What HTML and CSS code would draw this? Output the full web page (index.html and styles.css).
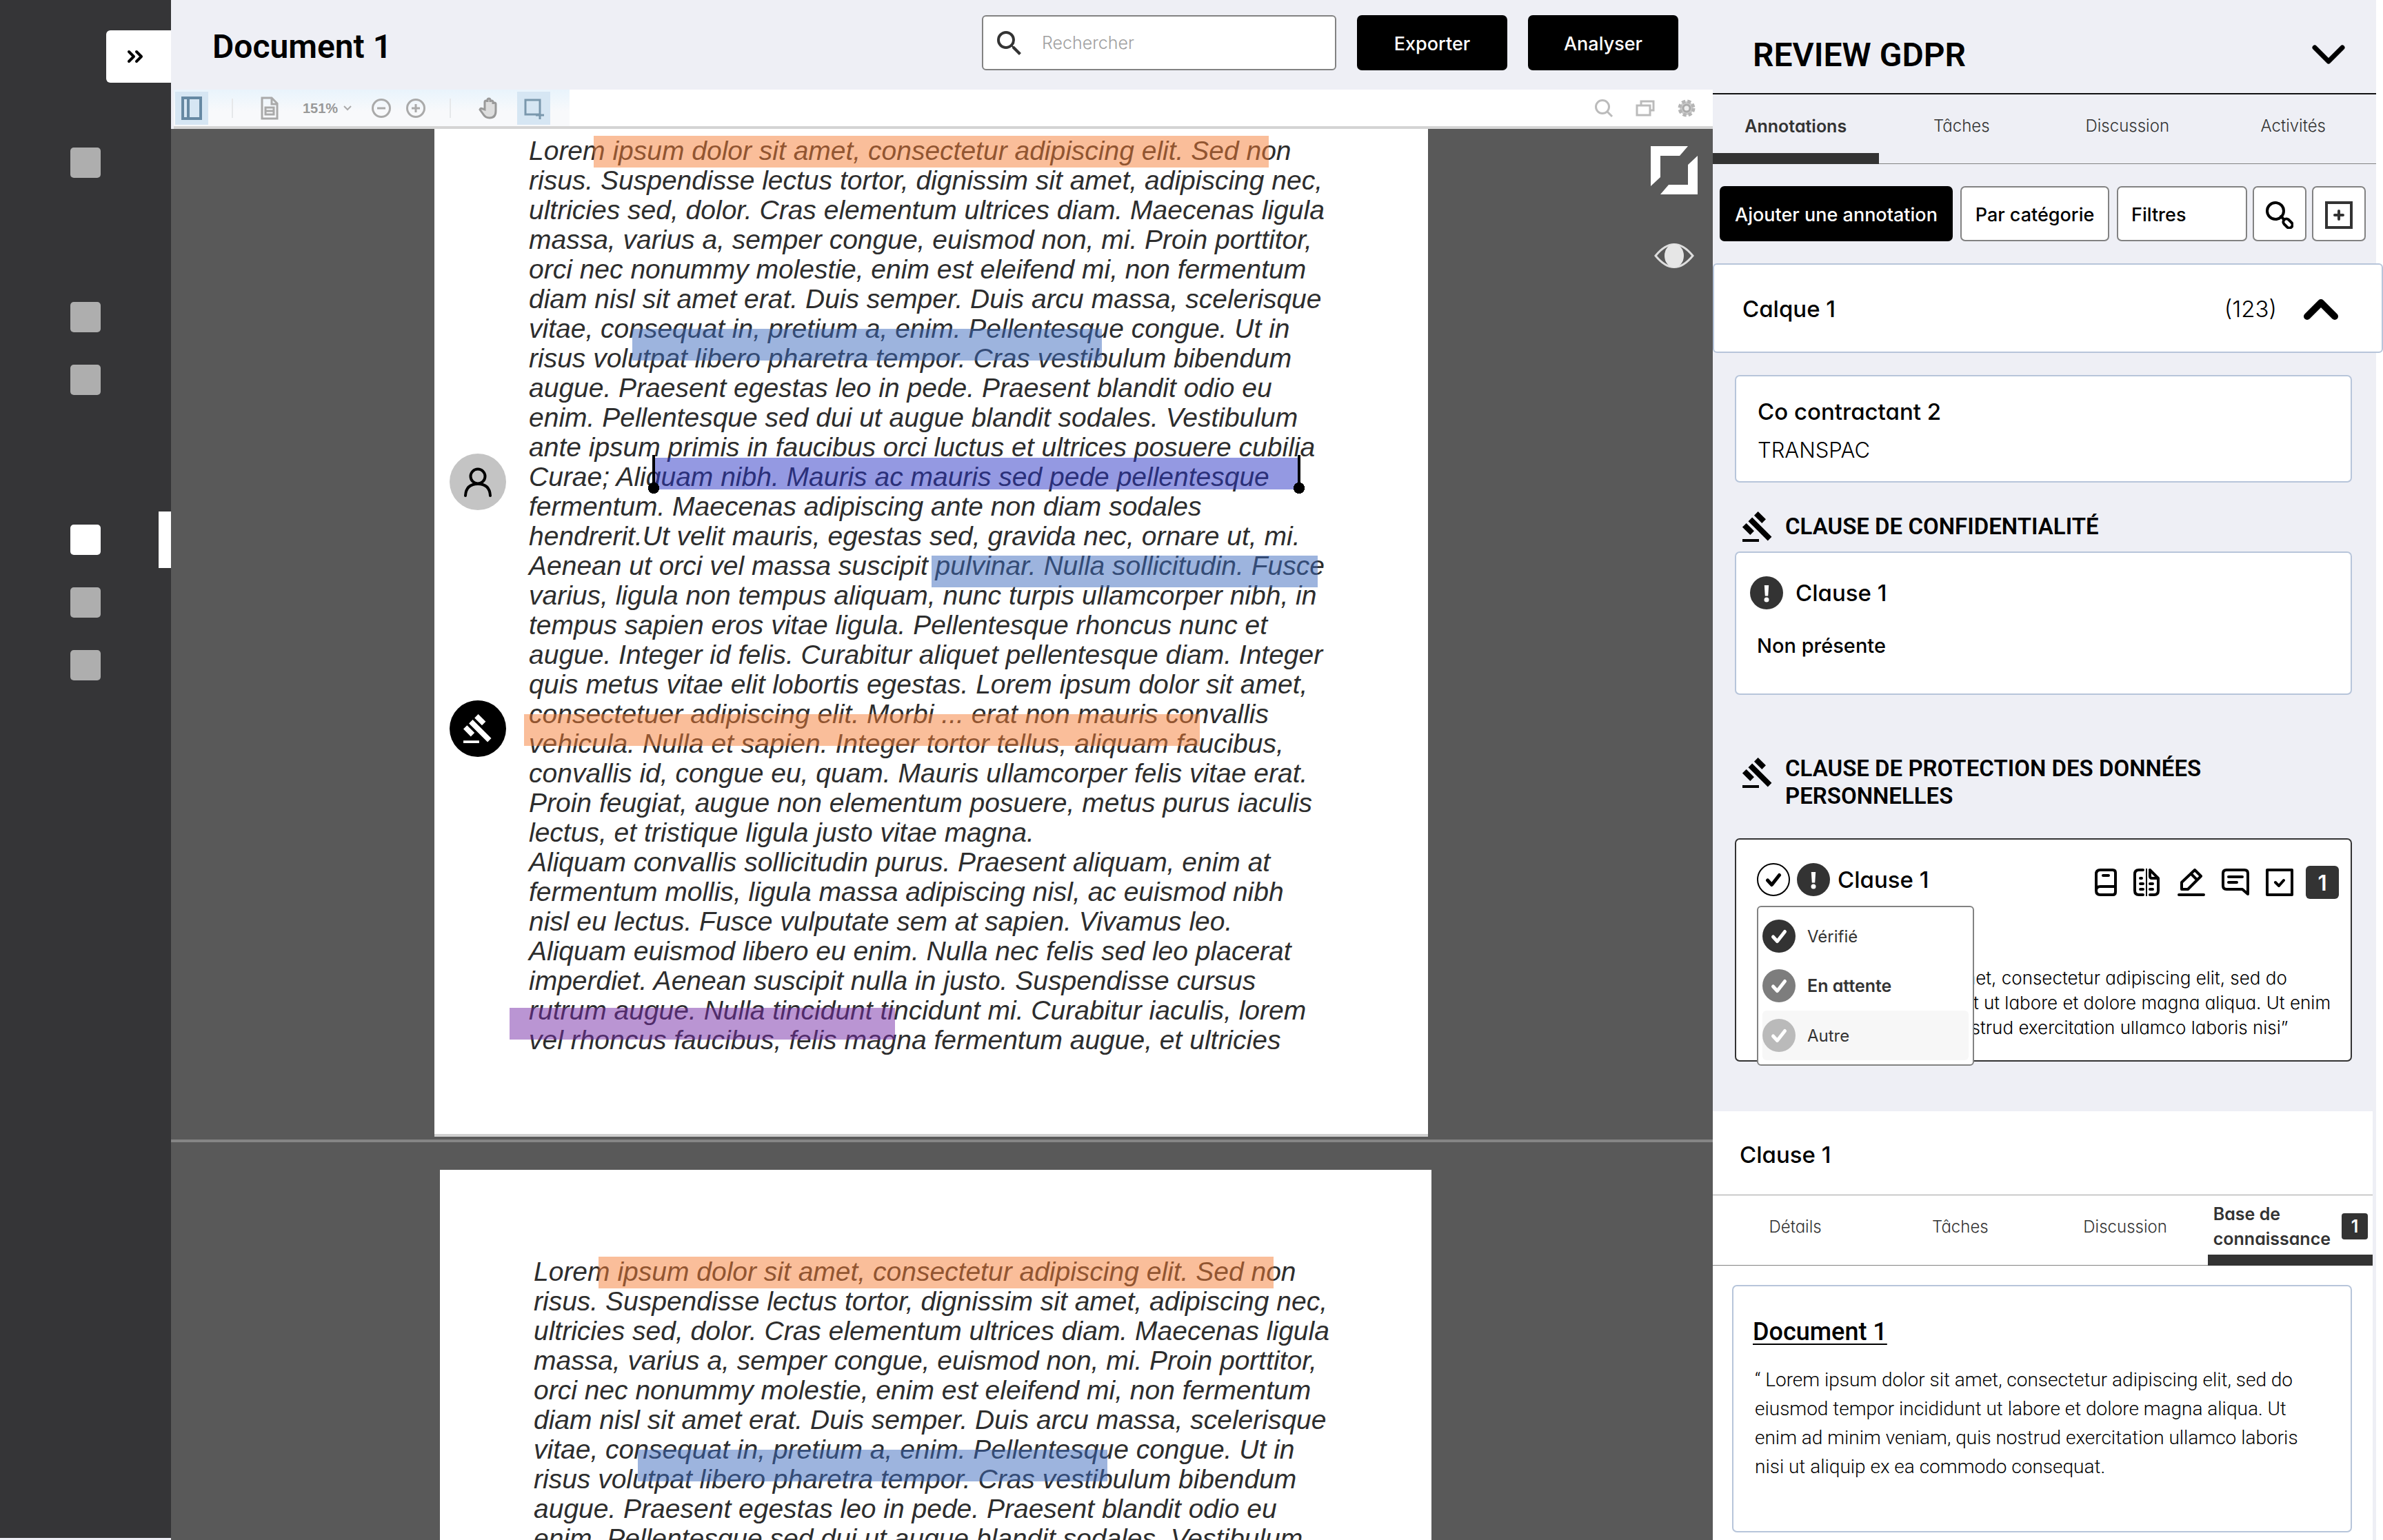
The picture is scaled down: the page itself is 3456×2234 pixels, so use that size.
FILE: index.html
```html
<!DOCTYPE html>
<html lang="fr">
<head>
<meta charset="utf-8">
<title>Document 1 - Review GDPR</title>
<link rel="stylesheet" href="styles.css">
</head>
<body>
<svg class="sprite" aria-hidden="true">
  <symbol id="gavel" viewBox="1 1 22 22"><path d="M1 21h12v2H1zM5.245 8.07l2.83-2.827 14.14 14.142-2.828 2.828zM12.317 1l5.657 5.656-2.83 2.83-5.654-5.66zM3.825 9.485l5.657 5.657-2.828 2.828-5.657-5.657z"/></symbol>
  <symbol id="check" viewBox="0 0 48 48"><path d="M15.500 25l6 6.500 11-14" fill="none" stroke="currentColor" stroke-width="5" stroke-linecap="round" stroke-linejoin="round"/></symbol>
  <symbol id="alert" viewBox="0 0 48 48"><path d="M20.800 13h6.400l-1 15.500h-4.400z" fill="currentColor"/><circle cx="24" cy="34" r="3.500" fill="currentColor"/></symbol>
</svg>
<div class="app">
  <nav class="sidebar" aria-label="Navigation">
    <button class="toggle" aria-label="Ouvrir le menu"><svg width="24" height="20" viewBox="0 0 24 20"><path d="M3 3l7 7-7 7M14 3l7 7-7 7" class="line w4"/></svg></button>
    <ul class="nav-list">
      <li class="nav-first"><a href="#n1" aria-label="Accueil"></a></li>
      <li class="nav-group"><a href="#n2" aria-label="Dossiers"></a></li>
      <li><a href="#n3" aria-label="Recherche"></a></li>
      <li class="nav-group current"><a href="#n4" aria-label="Documents"></a></li>
      <li><a href="#n5" aria-label="Rapports"></a></li>
      <li><a href="#n6" aria-label="Paramètres"></a></li>
    </ul>
  </nav>

  <main class="viewer">
    <header class="topbar">
      <h1>Document 1</h1>
      <label class="search">
        <svg width="35" height="35" viewBox="3 3 17.500 17.500"><path d="M15.500 14h-.79l-.28-.27A6.471 6.471 0 0 0 16 9.500 6.500 6.500 0 1 0 9.500 16c1.610 0 3.090-.59 4.230-1.570l.27.28v.79l5 4.990L20.490 19l-4.990-5zm-6 0C7.010 14 5 11.990 5 9.500S7.010 5 9.500 5 14 7.010 14 9.500 11.990 14 9.500 14z" fill="#333"/></svg>
        <input type="search" placeholder="Rechercher" aria-label="Rechercher">
      </label>
      <button class="btn primary">Exporter</button>
      <button class="btn primary">Analyser</button>
    </header>

    <div class="pdfbar">
      <div class="pdf-left">
        <button class="pdf-btn on first" aria-label="Vignettes"><svg width="30" height="36" viewBox="0 0 30 36"><path d="M2 3h26v30H2zM10 3v30" fill="none" stroke="#6689a3" stroke-width="4"/></svg></button>
        <i class="sep"></i>
        <button class="pdf-btn" aria-label="Page"><svg width="26" height="34" viewBox="0 0 26 34"><path d="M2 2h14l8 8v22H2zM16 2v9h8M7 16h12v10H7zM7 21h12" fill="none" stroke="#aaa" stroke-width="3"/></svg></button>
        <button class="zoom-level">151% <svg width="12" height="8" viewBox="0 0 12 8"><path d="M1 1l5 5 5-5" fill="none" stroke="#aaa" stroke-width="2"/></svg></button>
        <button class="pdf-btn" aria-label="Zoom arrière"><svg width="30" height="30" viewBox="0 0 30 30"><circle cx="15" cy="15" r="12.500" fill="none" stroke="#aaa" stroke-width="3"/><path d="M9 15h12" stroke="#aaa" stroke-width="3"/></svg></button>
        <button class="pdf-btn" aria-label="Zoom avant"><svg width="30" height="30" viewBox="0 0 30 30"><circle cx="15" cy="15" r="12.500" fill="none" stroke="#aaa" stroke-width="3"/><path d="M9 15h12M15 9v12" stroke="#aaa" stroke-width="3"/></svg></button>
        <i class="sep"></i>
        <button class="pdf-btn hand" aria-label="Main"><svg width="30" height="32" viewBox="0 0 30 32"><path d="M9 18V7q0-2 2-2t2 2V4q0-2 2-2t2 2v3q0-2 2-2t2 2v3q0-2 2-2t2 2v10q0 10-9 10-6 0-9-5l-5-7q1-3 4-1z" fill="#ddd" stroke="#999" stroke-width="3"/></svg></button>
        <button class="pdf-btn on" aria-label="Sélection"><svg width="30" height="32" viewBox="0 0 30 32"><path d="M3 4h21v21H3zM24 20v12M18 26h12" fill="none" stroke="#7a98ad" stroke-width="3"/></svg></button>
      </div>
      <div class="pdf-right">
        <button class="pdf-btn" aria-label="Chercher"><svg width="28" height="28" viewBox="0 0 28 28"><circle cx="12" cy="12" r="9.500" fill="none" stroke="#bbb" stroke-width="3"/><path d="M19 19l7 7" stroke="#bbb" stroke-width="3"/></svg></button>
        <button class="pdf-btn" aria-label="Fenêtres"><svg width="28" height="26" viewBox="0 0 28 26"><path d="M2 9h19v14H2zM8 9V3h18v13h-5" fill="none" stroke="#bbb" stroke-width="3"/></svg></button>
        <button class="pdf-btn" aria-label="Réglages"><svg width="28" height="28" viewBox="0 0 28 28"><circle cx="14" cy="14" r="10" fill="#ccc" stroke="#b5b5b5" stroke-width="5" stroke-dasharray="5 3"/><circle cx="14" cy="14" r="5" fill="#eee" stroke="#aaa" stroke-width="3"/></svg></button>
      </div>
    </div>

    <div class="canvas">
      <article class="page">
        <p>Lorem ipsum dolor sit amet, consectetur adipiscing elit. Sed non<br>
risus. Suspendisse lectus tortor, dignissim sit amet, adipiscing nec,<br>
ultricies sed, dolor. Cras elementum ultrices diam. Maecenas ligula<br>
massa, varius a, semper congue, euismod non, mi. Proin porttitor,<br>
orci nec nonummy molestie, enim est eleifend mi, non fermentum<br>
diam nisl sit amet erat. Duis semper. Duis arcu massa, scelerisque<br>
vitae, consequat in, pretium a, enim. Pellentesque congue. Ut in<br>
risus volutpat libero pharetra tempor. Cras vestibulum bibendum<br>
augue. Praesent egestas leo in pede. Praesent blandit odio eu<br>
enim. Pellentesque sed dui ut augue blandit sodales. Vestibulum<br>
ante ipsum primis in faucibus orci luctus et ultrices posuere cubilia<br>
Curae; Aliquam nibh. Mauris ac mauris sed pede pellentesque<br>
fermentum. Maecenas adipiscing ante non diam sodales<br>
hendrerit.Ut velit mauris, egestas sed, gravida nec, ornare ut, mi.<br>
Aenean ut orci vel massa suscipit pulvinar. Nulla sollicitudin. Fusce<br>
varius, ligula non tempus aliquam, nunc turpis ullamcorper nibh, in<br>
tempus sapien eros vitae ligula. Pellentesque rhoncus nunc et<br>
augue. Integer id felis. Curabitur aliquet pellentesque diam. Integer<br>
quis metus vitae elit lobortis egestas. Lorem ipsum dolor sit amet,<br>
consectetuer adipiscing elit. Morbi ... erat non mauris convallis<br>
vehicula. Nulla et sapien. Integer tortor tellus, aliquam faucibus,<br>
convallis id, congue eu, quam. Mauris ullamcorper felis vitae erat.<br>
Proin feugiat, augue non elementum posuere, metus purus iaculis<br>
lectus, et tristique ligula justo vitae magna.<br>
Aliquam convallis sollicitudin purus. Praesent aliquam, enim at<br>
fermentum mollis, ligula massa adipiscing nisl, ac euismod nibh<br>
nisl eu lectus. Fusce vulputate sem at sapien. Vivamus leo.<br>
Aliquam euismod libero eu enim. Nulla nec felis sed leo placerat<br>
imperdiet. Aenean suscipit nulla in justo. Suspendisse cursus<br>
rutrum augue. Nulla tincidunt tincidunt mi. Curabitur iaculis, lorem<br>
vel rhoncus faucibus, felis magna fermentum augue, et ultricies</p>
        <span class="hl orange hl-a"></span>
        <span class="hl blue hl-b"></span>
        <span class="hl select hl-c"></span>
        <span class="hl blue hl-d"></span>
        <span class="hl orange hl-e"></span>
        <span class="hl purple hl-f"></span>
        <button class="pin user" aria-label="Annotation utilisateur"><svg width="40" height="44" viewBox="0 0 40 44"><circle cx="20" cy="14" r="10.500" class="line w4"/><path d="M2 42q1-17 18-17t18 17" class="line w4"/></svg></button>
        <button class="pin legal" aria-label="Annotation juridique"><svg width="42" height="44"><use href="#gavel"/></svg></button>
      </article>
      <hr>
      <article class="page second">
        <p>Lorem ipsum dolor sit amet, consectetur adipiscing elit. Sed non<br>
risus. Suspendisse lectus tortor, dignissim sit amet, adipiscing nec,<br>
ultricies sed, dolor. Cras elementum ultrices diam. Maecenas ligula<br>
massa, varius a, semper congue, euismod non, mi. Proin porttitor,<br>
orci nec nonummy molestie, enim est eleifend mi, non fermentum<br>
diam nisl sit amet erat. Duis semper. Duis arcu massa, scelerisque<br>
vitae, consequat in, pretium a, enim. Pellentesque congue. Ut in<br>
risus volutpat libero pharetra tempor. Cras vestibulum bibendum<br>
augue. Praesent egestas leo in pede. Praesent blandit odio eu<br>
enim. Pellentesque sed dui ut augue blandit sodales. Vestibulum</p>
        <span class="hl orange hl-g"></span>
        <span class="hl blue hl-h"></span>
      </article>
      <div class="float-tools">
        <button aria-label="Plein écran"><svg width="68" height="70" viewBox="0 0 68 70"><path d="M0 0h54L42 14H14v31L0 58zM68 14v56H14l12-14h28V27z" fill="#fff"/></svg></button>
        <button aria-label="Afficher"><svg width="58" height="38" viewBox="0 0 58 38"><path d="M2 19Q29-14 56 19 29 52 2 19z" fill="none" stroke="#ddd" stroke-width="3"/><ellipse cx="29" cy="19" rx="14" ry="17" fill="#e6e6e6"/></svg></button>
      </div>
    </div>
  </main>

  <aside class="panel">
    <div class="panel-in">
      <header class="panel-head">
        <h2>REVIEW GDPR</h2>
        <button aria-label="Replier"><svg width="48" height="30" viewBox="0 0 48 30"><path d="M4 4l20 20L44 4" class="line w7"/></svg></button>
      </header>
      <div class="tabs" role="tablist">
        <button role="tab" aria-selected="true">Annotations</button>
        <button role="tab">Tâches</button>
        <button role="tab">Discussion</button>
        <button role="tab">Activités</button>
      </div>
      <div class="actions">
        <button class="btn primary add">Ajouter une annotation</button>
        <button class="btn outline cat">Par catégorie</button>
        <select class="btn outline filter" aria-label="Filtres"><option>Filtres</option></select>
        <button class="btn outline icon" aria-label="Rechercher une annotation"><svg width="40" height="40" viewBox="0 0 40 40"><circle cx="14" cy="14" r="12" class="line w4"/><path d="M22 22l4 4" class="line w4"/><rect x="24.500" y="27.500" width="15" height="9" rx="4.500" transform="rotate(45 32 32)" class="line w4"/></svg></button>
        <button class="btn outline icon" aria-label="Nouveau calque"><svg width="40" height="40" viewBox="0 0 40 40"><path d="M2 2h36v36H2zM20 14v12M14 20h12" fill="none" stroke="#333" stroke-width="4" stroke-linecap="round"/></svg></button>
      </div>
      <section class="layer">
        <h3>Calque 1</h3>
        <span class="count">(123)</span>
        <button aria-label="Replier le calque"><svg width="52" height="34" viewBox="0 0 52 34"><path d="M6 28L26 8l20 20" class="line w9"/></svg></button>
      </section>
      <div class="list">
        <section class="card party">
          <h4>Co contractant 2</h4>
          <p>TRANSPAC</p>
        </section>
        <h3 class="clause-title"><svg width="44" height="44"><use href="#gavel"/></svg><span>CLAUSE DE CONFIDENTIALITÉ</span></h3>
        <section class="card missing">
          <div class="card-head"><svg class="dot dark" width="48" height="48"><use href="#alert"/></svg><h4>Clause 1</h4></div>
          <p>Non présente</p>
        </section>
        <h3 class="clause-title tall"><svg width="44" height="44"><use href="#gavel"/></svg><span>CLAUSE DE PROTECTION DES DONNÉES<br>PERSONNELLES</span></h3>
        <section class="card active">
          <div class="card-head">
            <button class="status" aria-label="Statut"><svg class="dot ring" width="48" height="48" viewBox="2 2 44 44"><use href="#check" width="48" height="48"/></svg></button>
            <svg class="dot dark" width="48" height="48"><use href="#alert"/></svg>
            <h4>Clause 1</h4>
            <div class="tools">
              <button aria-label="Livre"><svg width="32" height="40" viewBox="0 0 32 40"><path d="M8 2h18q4 0 4 4v28q0 4-4 4H8q-6 0-6-6V8q0-6 6-6zM2 32q0-6 6-6h22M12 10h8" class="line w4"/></svg></button>
              <button aria-label="Comparer"><svg width="40" height="40" viewBox="0 0 40 40"><path d="M14 2H8Q2 2 2 8v24q0 6 6 6h6M24 2l12 12v18q0 6-6 6h-6M24 4v7q0 3 3 3h8M10 14h2M10 22h4M10 30h4M24 22h4M24 30h4" class="line w4"/><path d="M19 0v40" fill="none" stroke="#000" stroke-width="2"/></svg></button>
              <button aria-label="Modifier"><svg width="40" height="40" viewBox="0 0 40 40"><path d="M2 38h36M6 30V20L25 2l9 9-19 19zM20 8l8 8" class="line w4"/></svg></button>
              <button aria-label="Commenter"><svg width="40" height="40" viewBox="0 0 40 40"><path d="M7 2h26q5 0 5 5v30l-8-7H7q-5 0-5-5V7q0-5 5-5zM10 12h20M10 20h12" class="line w4"/></svg></button>
              <button aria-label="Tâche"><svg width="40" height="40" viewBox="0 0 40 40"><path d="M2 2h36v36H2zM14 20l5 5 7-8" class="line w4"/></svg></button>
              <span class="badge">1</span>
            </div>
          </div>
          <p>“Lorem ipsum dolor sit amet, consectetur adipiscing elit, sed do<br>eiusmod tempor incididunt ut labore et dolore magna aliqua. Ut enim<br>ad minim veniam, quis nostrud exercitation ullamco laboris nisi”</p>
          <div class="menu" role="menu">
            <button role="menuitem"><svg class="dot dark" width="48" height="48"><use href="#check"/></svg>Vérifié</button>
            <button role="menuitem" class="bold"><svg class="dot mid" width="48" height="48"><use href="#check"/></svg>En attente</button>
            <button role="menuitem" class="hover"><svg class="dot light" width="48" height="48"><use href="#check"/></svg>Autre</button>
          </div>
        </section>
      </div>
      <section class="detail">
        <h3>Clause 1</h3>
        <div class="tabs" role="tablist">
          <button role="tab">Détails</button>
          <button role="tab">Tâches</button>
          <button role="tab">Discussion</button>
          <button role="tab" aria-selected="true" class="kb"><span>Base de<br>connaissance</span><span class="badge small">1</span></button>
        </div>
        <article class="card source">
          <h4><a href="#doc1">Document 1</a></h4>
          <p>“ Lorem ipsum dolor sit amet, consectetur adipiscing elit, sed do<br>eiusmod tempor incididunt ut labore et dolore magna aliqua. Ut<br>enim ad minim veniam, quis nostrud exercitation ullamco laboris<br>nisi ut aliquip ex ea commodo consequat.</p>
        </article>
      </section>
    </div>
  </aside>
</div>
</body>
</html>
```
FILE: styles.css
```css
* { box-sizing: border-box; margin: 0; padding: 0; }
body { font-family: Inter, sans-serif; font-feature-settings: "cv11"; color: #000; background: #eeeff5; }
button, input, select { font: inherit; font-feature-settings: inherit; color: inherit; background: none; border: 0; }
svg { display: block; flex: none; }
.sprite { position: absolute; width: 0; height: 0; }
.line { fill: none; stroke: currentColor; stroke-linecap: round; stroke-linejoin: round; }
.w4 { stroke-width: 4px; }
.w7 { stroke-width: 7px; }
.w9 { stroke-width: 10px; }
ul { list-style: none; }

.app { display: grid; grid-template-columns: 248px 1fr 972px; height: 100vh; overflow: hidden; }

/* left navigation */
.sidebar { background: #353537; margin-bottom: 5px; padding-top: 44px; }
.toggle { display: flex; align-items: center; justify-content: center; width: 94px; height: 76px; margin-left: auto; padding-right: 10px; background: #fff; border-radius: 6px 0 0 6px; }
.nav-first { margin-top: 94px; }
.nav-list li { display: flex; align-items: center; justify-content: space-between; height: 44px; margin-bottom: 47px; padding-left: 102px; }
.nav-list li.nav-first { margin-bottom: 180px; }
.nav-list a { width: 44px; height: 44px; border-radius: 5px; background: #aeaeae; }
.nav-list li.current { margin-top: 188px; }
.nav-list .current a { background: #fff; }
.nav-list .current::after { content: ""; width: 18px; height: 82px; background: #fff; }

/* document viewer */
.viewer { display: flex; flex-direction: column; min-width: 0; min-height: 0; }
.topbar { display: flex; align-items: flex-start; gap: 30px; height: 130px; flex: none; padding: 22px 50px 0 60px; }
.topbar h1 { flex: 1; font: 600 48px/56px Roboto, sans-serif; padding-top: 18px; }
.search { display: flex; align-items: center; gap: 30px; width: 514px; height: 80px; padding: 0 20px; background: #fff; border: 2px solid #828282; border-radius: 6px; }
.search input { flex: 1; min-width: 0; font-size: 25px; font-weight: 300; outline: 0; }
.search input::placeholder { color: #a0a0a0; opacity: 1; }
.btn { height: 80px; padding-top: 3px; border-radius: 7px; font-size: 27px; line-height: 32px; font-weight: 500; font-feature-settings: normal; white-space: nowrap; }
.primary { background: #000; color: #fff; }
.topbar .primary { width: 218px; }

.pdfbar { display: flex; justify-content: space-between; flex: none; height: 57px; margin-left: 4px; background: #fff; border-bottom: 4px solid #d4d4d4; }
.pdf-left { display: flex; align-items: center; width: 574px; padding-left: 2px; background: linear-gradient(#e9f4fc, #f8f9fb 60%); gap: 20px; }
.pdf-btn { display: flex; align-items: center; justify-content: center; height: 48px; }
.pdf-btn.on { width: 48px; background: #d6e6f3; }
.sep { width: 2px; height: 28px; margin: 0 20px 0 14px; background: #e6e8ea; }
.zoom-level { display: flex; align-items: center; gap: 8px; margin: 0 8px 0 15px; color: #999; font: 700 20px/24px "Liberation Sans", sans-serif; }
.hand { margin-right: 6px; }
.pdf-right { display: flex; align-items: center; gap: 32px; padding-right: 24px; }

.canvas { position: relative; flex: 1; min-height: 0; overflow: hidden; background: #595959; }
.page { position: relative; margin: 0 413px 0 382px; padding: 10px 0 115px 137px; background: #fff; border-bottom: 4px solid #d0d0d0; }
.page p { font: italic 39px/43px "Liberation Sans", Arial, sans-serif; color: #2d2d2d; white-space: nowrap; }
.canvas hr { height: 4px; margin: 4px 0 40px; border: 0; background: #858585; }
.page.second { margin: 0 408px 0 390px; padding: 126px 0 120px 136px; }
.hl { position: absolute; height: 46px; }
.orange { background: rgba(246, 125, 54, .5); }
.blue { background: rgba(60, 105, 190, .5); }
.select { background: rgba(42, 51, 197, .5); }
.purple { background: rgba(118, 44, 168, .5); }
.hl-a { left: 231px; top: 10px; width: 979px; }
.hl-b { left: 287px; top: 290px; width: 681px; }
.hl-c { left: 318px; top: 477px; width: 936px; }
.hl-d { left: 721px; top: 619px; width: 560px; }
.hl-e { left: 130px; top: 849px; width: 980px; }
.hl-f { left: 109px; top: 1275px; width: 559px; }
.hl-g { left: 230px; top: 126px; width: 979px; }
.hl-h { left: 287px; top: 406px; width: 681px; }
.select::before, .select::after { content: ""; position: absolute; top: -4px; width: 16px; height: 56px; background: radial-gradient(circle at 8px 48px, #000 8px, transparent 8px), linear-gradient(#000, #000) 6px 0 / 4px 48px no-repeat; }
.select::before { left: -8px; }
.select::after { right: -8px; }
.pin { position: absolute; left: 22px; display: flex; align-items: center; justify-content: center; width: 82px; height: 82px; border-radius: 50%; }
.user { top: 471px; background: #c4c4c4; }
.legal { top: 829px; background: #000; fill: #fff; }
.float-tools { position: absolute; top: 25px; right: 22px; display: flex; flex-direction: column; align-items: center; gap: 70px; }

/* right panel */
.panel { background: #fff; min-width: 0; }
.panel-in { margin-right: 10px; min-height: 100%; background: #eeeff5; }
.panel-head { display: flex; justify-content: space-between; align-items: center; height: 137px; padding: 24px 45px 0 58px; border-bottom: 2px solid #111; }
.panel-head h2 { font: 600 48px/56px Roboto, sans-serif; }
.tabs { display: grid; grid-template-columns: repeat(4, 1fr); height: 101px; border-bottom: 1px solid #828282; font-size: 24px; line-height: 36px; font-weight: 300; color: #333; }
.tabs button { display: flex; justify-content: center; padding-top: 28px; margin-bottom: -1px; }
.tabs [aria-selected] { font-size: 25px; font-weight: 600; border-bottom: 16px solid #333; }
.actions { display: flex; gap: 8px; padding: 32px 15px 32px 10px; }
.outline { background: #fff; border: 2px solid #828282; }
.add { width: 338px; margin-right: 3px; }
.cat { width: 216px; margin-right: 3px; }
.filter { flex: 1; padding-left: 19px; appearance: none; }
.icon { display: flex; align-items: center; justify-content: center; width: 78px; }
h3, h4 { font-size: 33px; line-height: 40px; font-weight: 500; }
.layer { display: flex; align-items: center; height: 130px; margin-right: -10px; padding: 2px 62px 0 41px; background: #fff; border: 2px solid #b7c5da; border-radius: 6px; }
.layer h3 { flex: 1; }
.count { margin-right: 38px; font-size: 33px; font-weight: 300; }
.list { padding: 32px 35px 72px 32px; }
.card { background: #fff; border: 2px solid #b7c5da; border-radius: 7px; }
.party { padding: 31px 31px 25px; }
.party p { margin-top: 16px; font-size: 31px; line-height: 40px; font-weight: 300; }
.clause-title { display: flex; gap: 18px; align-items: center; margin: 42px 0 14px 11px; font: 600 33px/40px Roboto, sans-serif; }
.clause-title.tall { align-items: flex-start; margin: 87px 0 41px 11px; }
.tall svg { margin-top: 4px; }
.card-head { display: flex; align-items: center; }
.dot { border-radius: 50%; color: #fff; }
.dark { background: #333; }
.mid { background: #7d7d7d; }
.light { background: #bababa; }
.ring { border: 2px solid #000; color: #000; }
.missing { padding: 34px 20px 51px; }
.missing h4 { margin-left: 18px; }
.missing p { margin: 35px 0 0 10px; font-size: 29px; line-height: 36px; font-weight: 500; }
.active { position: relative; padding: 30px 17px 29px 30px; border-color: #333; }
.status { margin-right: 10px; }
.active h4 { margin-left: 11px; }
.tools { display: flex; align-items: center; gap: 24px; margin-left: auto; padding-top: 8px; }
.badge { display: flex; align-items: center; justify-content: center; width: 48px; height: 48px; margin-left: -6px; background: #333; color: #fff; border-radius: 6px; font-size: 31px; font-weight: 600; }
.active p { margin-top: 97px; font-size: 26px; line-height: 36px; font-weight: 300; white-space: nowrap; }
.menu { position: absolute; left: 30px; top: 96px; width: 315px; padding: 6px; background: #fff; border: 2px solid #828282; border-radius: 6px; }
.menu button { display: flex; align-items: center; gap: 17px; width: 100%; height: 72px; font-size: 24px; color: #333; }
.menu .bold { font-size: 25px; font-weight: 600; }
.menu .hover { background: #f7f7f7; border-radius: 6px; }

.detail { margin-right: 5px; background: #fff; padding-bottom: 13px; }
.detail h3 { height: 122px; padding: 43px 39px 0; border-bottom: 1px solid #a0a0a0; }
.detail .tabs { height: 102px; }
.detail .kb { align-items: center; justify-content: space-between; padding: 3px 7px 0 8px; text-align: left; line-height: 36px; }
.small { width: 38px; height: 38px; margin: 0; border-radius: 4px; font-size: 25px; }
.source { margin: 28px 30px 0 28px; padding: 44px 30px 72px 28px; }
.source h4 { font: 500 36px/44px Roboto, sans-serif; }
.source a { color: inherit; text-underline-offset: 5px; text-decoration-thickness: 2px; }
.source p { margin: 27px 0 0 3px; font: 300 28px/42px Roboto, sans-serif; white-space: nowrap; }
```
